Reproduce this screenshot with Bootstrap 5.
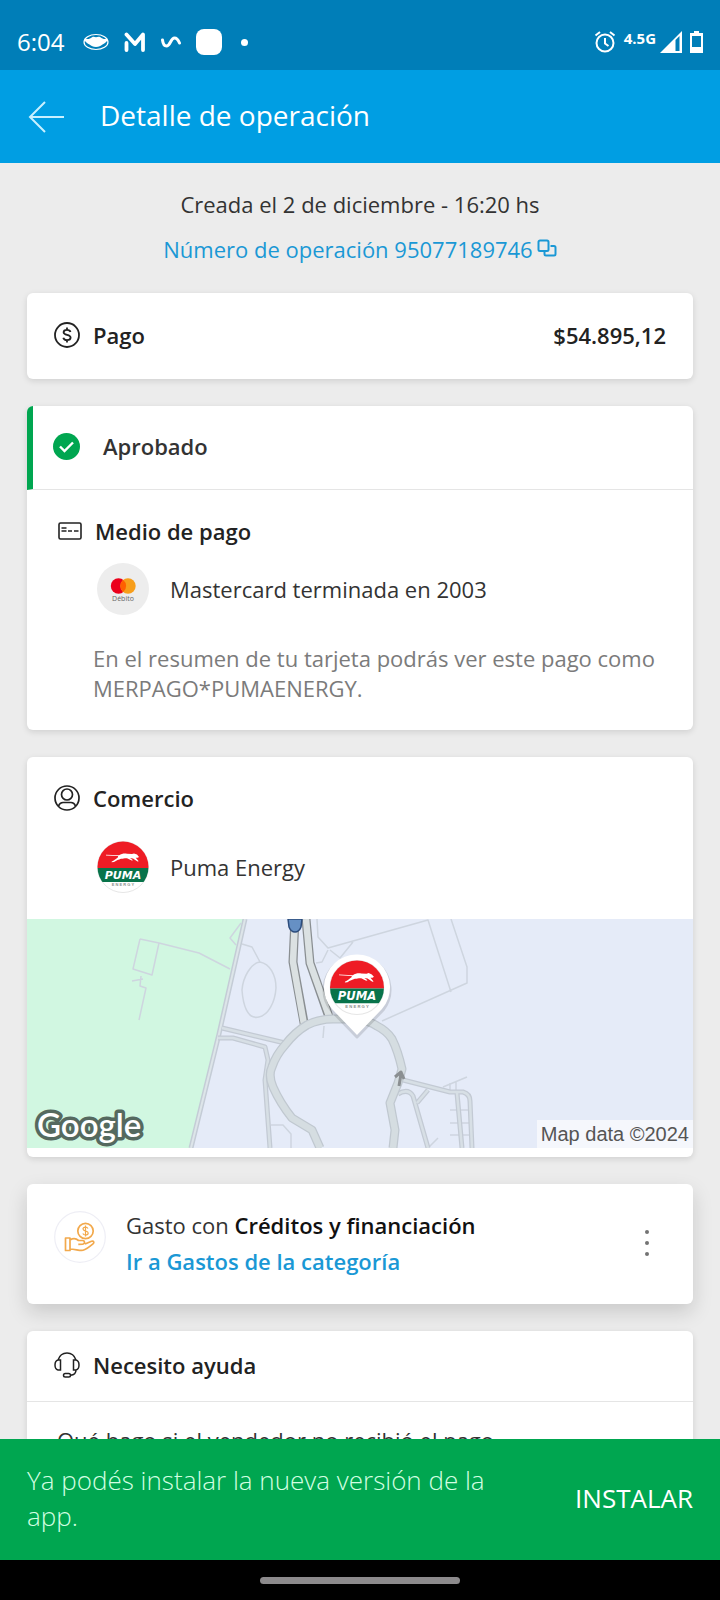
<!DOCTYPE html>
<html lang="es">
<head>
<meta charset="utf-8">
<meta name="viewport" content="width=device-width, initial-scale=1">
<title>Detalle de operación</title>
<link href="https://cdn.jsdelivr.net/npm/bootstrap@5.3.0/dist/css/bootstrap.min.css" rel="stylesheet">
<style>
  body { background: #ececec; color: #333; font-family: "Open Sans", sans-serif; font-size: 22px; line-height: 32px; }
  svg { display: block; flex: none; }
  .status-bar { background: #007eb8; height: 70px; padding: 14px 17px 0; }
  .clock { font-size: 24px; }
  .notices { gap: 15px; }
  .network { font-size: 15px; line-height: 20px; }
  .app-bar { background: #009ee3; height: 93px; padding: 0 28px; gap: 35px; }
  .app-bar h1 { font-size: 28px; line-height: 36px; }
  .intro { padding: 25px 27px 28px; gap: 13px; }
  .sheet { padding: 0 27px; gap: 27px; }
  .panel { border: 0; border-radius: 6px; box-shadow: 0 2px 6px rgba(0,0,0,.12); color: #333; }
  .panel-raised { box-shadow: 0 8px 20px rgba(0,0,0,.15); }
  .brand-link { color: #1a98d5; text-decoration: none; }
  .title { font-size: 22px; line-height: 32px; font-weight: 600; margin: 0; color: #222; }
  .head { gap: 13px; }
  .pay { padding: 26px 27px 28px; }
  .pad { padding: 25px 27px 27px; }
  .shop { padding: 25px 27px 26px; }
  .approved { border-left: 6px solid #00a650; border-bottom: 1px solid #e5e5e5; border-top-left-radius: 6px; padding: 24px 20px 27px; gap: 23px; }
  .approved .title { color: #333; }
  .detail { padding-left: 43px; gap: 21px; margin-top: 16px; }
  .shop .detail { margin-top: 27px; }
  .note { color: #7b7b7b; line-height: 30px; padding-left: 39px; margin: 28px 0 0; }
  .avatar { width: 52px; height: 52px; }
  .map { height: 229px; margin-bottom: 9px; }
  .credit { background: rgba(255,255,255,.6); color: #555; font-family: "Liberation Sans", sans-serif; font-size: 20px; line-height: 28px; padding: 0 4px; }
  .spend { padding: 23px 27px 25px; gap: 20px; }
  .spend-lines { line-height: 36px; }
  .spend-lines b { font-weight: 600; color: #111; }
  .help { padding: 18px 27px 20px; }
  .question { border-top: 1px solid #e5e5e5; padding: 22px 30px 8px; color: #333; }
  .snack { background: #00a650; color: #d3ffe2; font-size: 26px; font-weight: 300; line-height: 36px; padding: 23px 27px 26px; gap: 64px; }
  .snack .btn { color: #fff; font-size: 26px; line-height: 36px; }
  .nav-zone { background: #000; height: 40px; }
  .nav-handle { background: #8c8a8c; width: 200px; height: 7px; }
</style>
</head>
<body>

<svg width="0" height="0" class="position-absolute" aria-hidden="true">
  <defs>
    <clipPath id="disc"><circle cx="26" cy="26" r="25.5"/></clipPath>
    <symbol id="puma" viewBox="0 0 52 52">
      <circle cx="26" cy="26" r="25.5" fill="#fff" stroke="#e6e6e6"/>
      <g clip-path="url(#disc)">
        <path d="M0 0h52v27H0z" fill="#ee1c25"/>
        <path d="M0 27h52v14H0z" fill="#08734a"/>
      </g>
      <path d="M9 13.7l13 .6c2.600-1.600 5-2 8-1.600l5 .3 2-.6 3 1.200 2 2.300-1.300.9-2-.1 3 3.600-1.200.3-4.500-3.200-3-.3 3 2.100-1.300.3-4.700-2.300c-3-.1-4 .7-6 .6-2.500.8-4.500 1.700-7 3.200l-2.500.3.3-.9c2.200-.9 3.700-2.200 6-4l.3-1.300L9 14.500z" fill="#fff"/>
      <text x="26" y="37.500" text-anchor="middle" font-family="DejaVu Sans, sans-serif" font-size="11" font-weight="700" font-style="italic" fill="#fff">PUMA</text>
      <text x="26" y="45" text-anchor="middle" font-family="Liberation Sans, sans-serif" font-size="4" font-weight="700" fill="#8a8f8c">E N E R G Y</text>
    </symbol>
  </defs>
</svg>

<header>
  <div class="status-bar d-flex align-items-center justify-content-between text-white">
    <div class="notices d-flex align-items-center">
      <span class="clock me-1">6:04</span>
      <svg width="26" height="20" viewBox="0 0 26 20"><ellipse cx="13" cy="10" rx="12" ry="7.500" fill="none" stroke="#fff" stroke-width="1.200"/><path d="M1.500 6.500c3 1 5.500.5 7.500-1.300 1.500-.8 2.500-.3 4 0 1.500-.5 3-.8 4.500 0 2 1.800 4.500 2.300 7 1.300 0 3.500-2.500 4.500-5 6-2 1.500-3.500 2.500-6.500 2.500s-4.500-1-6.500-2.500c-2.500-1.500-5-2.500-5-6z" fill="#fff"/></svg>
      <svg width="22" height="20" viewBox="0 0 22 20"><path d="M2.500 2.500L11 12l8-9.500V18M2.500 11v7" fill="none" stroke="#fff" stroke-width="3.800" stroke-linecap="round" stroke-linejoin="round"/></svg>
      <svg width="20" height="12" viewBox="0 0 20 12"><path d="M1.500 4c.5 4 2 6 4 6 4 0 4-8 8-8 2.500 0 3.500 1.500 5 5" fill="none" stroke="#fff" stroke-width="3" stroke-linecap="round"/></svg>
      <svg width="26" height="26" viewBox="0 0 26 26"><rect width="26" height="26" rx="8" fill="#fff"/></svg>
      <svg class="ms-1" width="7" height="7" viewBox="0 0 7 7"><circle cx="3.500" cy="3.500" r="3.500" fill="#fff"/></svg>
    </div>
    <div class="d-flex align-items-center">
      <svg width="22" height="22" viewBox="0 0 22 22" fill="none" stroke="#fff"><circle cx="11" cy="12" r="8.500" stroke-width="2"/><path d="M11 7v5.500l3.500 2.500M1.500 4.500L6 1M20.500 4.500L16 1" stroke-width="2"/></svg>
      <span class="network fw-bold ms-2 mb-2">4.5G</span>
      <svg class="ms-1" width="22" height="22" viewBox="0 0 22 22"><path d="M0 22L22 0v22z" fill="#fff"/><path d="M15.500 9l4-4v15h-4z" fill="#007eb8"/></svg>
      <svg class="ms-2" width="13" height="22" viewBox="0 0 13 22"><path d="M4 0h5v2h4v20H0V2h4z" fill="#fff"/><path d="M2 5h9v11H2z" fill="#007eb8"/></svg>
    </div>
  </div>
  <nav class="app-bar d-flex align-items-center text-white">
    <button type="button" class="btn p-0 border-0" aria-label="Volver">
      <svg width="37" height="32" viewBox="0 0 37 32" fill="none" stroke="#c8f0ff" stroke-width="2"><path d="M36 16H2M17 1L2 16l15 15"/></svg>
    </button>
    <h1 class="mb-1 fw-normal">Detalle de operación</h1>
  </nav>
</header>

<main>
  <section class="intro d-flex flex-column align-items-center text-center">
    <div>Creada el 2 de diciembre - 16:20 hs</div>
    <a href="#copiar" class="brand-link d-flex align-items-center gap-1">Número de operación 95077189746
      <svg width="20" height="20" viewBox="0 0 20 20" fill="none" stroke="currentColor" stroke-width="2"><path d="M7 12H3a1.500 1.500 0 0 1-1.500-1.500V3A1.500 1.500 0 0 1 3 1.500h7A1.500 1.500 0 0 1 11.500 3v7.500A1.500 1.500 0 0 1 10 12zM13.500 7H17a1.500 1.500 0 0 1 1.500 1.500V15a1.500 1.500 0 0 1-1.500 1.500H9A1.500 1.500 0 0 1 7.500 15v-4"/></svg>
    </a>
  </section>

  <div class="sheet d-flex flex-column">
    <section class="card panel">
      <div class="pay d-flex align-items-center justify-content-between">
        <div class="head d-flex align-items-center">
          <svg width="26" height="26" viewBox="0 0 26 26" fill="none" stroke="#222" stroke-width="1.800"><circle cx="13" cy="13" r="12"/><path d="M16.500 10c-.4-1.500-1.600-2.200-3.500-2.200s-3.400.9-3.400 2.500c0 3.600 7 1.600 7 5.300 0 1.600-1.400 2.600-3.600 2.600-2 0-3.300-.8-3.700-2.400M13 5.500V8M13 18v2.500"/></svg>
          <h2 class="title">Pago</h2>
        </div>
        <strong class="title">$54.895,12</strong>
      </div>
    </section>

    <section class="card panel">
      <div class="approved d-flex align-items-center">
        <svg width="27" height="27" viewBox="0 0 27 27"><circle cx="13.500" cy="13.500" r="13.500" fill="#00a650"/><path d="M7 13.500l4.500 4.500 8.500-8.500" fill="none" stroke="#fff" stroke-width="2.400"/></svg>
        <h2 class="title">Aprobado</h2>
      </div>
      <div class="pad">
        <div class="head d-flex align-items-center ps-1">
          <svg width="24" height="18" viewBox="0 0 24 18" fill="none" stroke="#222" stroke-width="1.600"><rect x="1" y="1" width="22" height="16" rx="1.500"/><path d="M3.500 6h5M3.500 9h5M10 9h4M16 9h4.500"/></svg>
          <h2 class="title">Medio de pago</h2>
        </div>
        <div class="detail d-flex align-items-center">
          <svg class="avatar" viewBox="0 0 52 52"><circle cx="26" cy="26" r="26" fill="#ededed"/><circle cx="21.500" cy="23" r="7.700" fill="#eb001b"/><circle cx="31" cy="23" r="7.700" fill="#f79e1b"/><path d="M26.250 17a7.700 7.700 0 0 1 0 12 7.700 7.700 0 0 1 0-12z" fill="#ff5f00"/><text x="26" y="38" text-anchor="middle" font-family="Open Sans, sans-serif" font-size="7" fill="#666">Débito</text></svg>
          <span>Mastercard terminada en 2003</span>
        </div>
        <p class="note">En el resumen de tu tarjeta podrás ver este pago como MERPAGO*PUMAENERGY.</p>
      </div>
    </section>

    <section class="card panel">
      <div class="shop">
        <div class="head d-flex align-items-center">
          <svg width="26" height="26" viewBox="0 0 26 26" fill="none" stroke="#222" stroke-width="1.700"><circle cx="13" cy="13" r="12"/><circle cx="13" cy="9.500" r="5.500"/><path d="M4.500 21c.8-2.200 2.500-3.500 4.500-3.500h8c2 0 3.700 1.300 4.500 3.500"/></svg>
          <h2 class="title">Comercio</h2>
        </div>
        <div class="detail d-flex align-items-center">
          <svg class="avatar"><use href="#puma"/></svg>
          <span>Puma Energy</span>
        </div>
      </div>
      <div class="map position-relative">
        <svg width="100%" height="100%" viewBox="0 0 666 229" preserveAspectRatio="xMidYMid slice" fill="none" stroke-linejoin="round">
          <path d="M0 0h666v229H0z" fill="#e5ebf8"/>
          <path d="M0 0h217l-26 115-28 114H0z" fill="#d1f7e1"/>
          <g stroke="#ced5df" stroke-width="1.500">
            <path d="M113 20l19 4 40 10 31 16M113 20l-7 30 19 6 7-32M105 62l11-2M114 57l-1 10 6 2-7 32M214 4l-11 15 6 7M215 25l10 3 8 15M233 43c10 2 16 13 16 26-1 15-8 27-17 29-12 3-16-13-17-27 1-13 9-27 18-28zM290 0l1 18 10 11 100-28 23 72M424 0l16 48v16l-85 38M301 31l-6 12-6 1M303 31l10 8 13-16M297 107l-1 12M244 206l12 0 8 9v14M416 168l24-10M423 173v-9M429 173v-11M423 191h20M423 204h20M423 216h20M401 229l10-10"/>
          </g>
          <path d="M218 0l-26 115-28 114" stroke="#c4ccd6" stroke-width="5"/>
          <path d="M218 0l-26 115-28 114" stroke="#dde5e9" stroke-width="2"/>
          <g stroke="#c3cad4" stroke-width="5">
            <path d="M195 109l63 15M191 119l15 0 32 9 3 13-3 20 5 68M376 161l47 12h13q7 2 7 9l2 47M430 174l5 55M371 175q10-6 15 2l15 52M390 184l11-13"/>
          </g>
          <g stroke="#d7dfe5" stroke-width="2.500">
            <path d="M195 109l63 15M191 119l15 0 32 9 3 13-3 20 5 68M376 161l47 12h13q7 2 7 9l2 47M430 174l5 55M371 175q10-6 15 2l15 52M390 184l11-13"/>
          </g>
          <g stroke="#8a8f92" stroke-width="9"><path d="M268 0l-2 43 12 66M279 0l4 44 19 54"/></g>
          <g stroke="#dbe1e2" stroke-width="6.500"><path d="M268 0l-2 43 12 68M279 0l4 44 20 56"/></g>
          <path d="M293 229l-8-18-20-12q-12-15-19-31-5-12-1-20 4-12 13-22 10-13 22-20 12-6 26-6h24q13 2 20 7 10 5 15 13 6 12 10 30l-4 14-8 20 5 27-2 18" stroke="#c0c8d0" stroke-width="9"/>
          <path d="M293 229l-8-18-20-12q-12-15-19-31-5-12-1-20 4-12 13-22 10-13 22-20 12-6 26-6h24q13 2 20 7 10 5 15 13 6 12 10 30l-4 14-8 20 5 27-2 18" stroke="#d5dde1" stroke-width="6.500"/>
          <path d="M261 0h14l-1 8q-2 5-6 5t-6-5z" fill="#6690c4" stroke="#2c4c7c" stroke-width="1.500"/>
          <path d="M372 167l2-12M368 158l6-5 3 7" stroke="#8b8f92" stroke-width="3"/>
          <path d="M330 118L304 91a33 33 0 1 1 52 0z" fill="#000" opacity=".12" stroke="#000" stroke-width="3"/>
          <path d="M330 116L305 90a33 33 0 1 1 50 0z" fill="#fff"/>
          <use href="#puma" x="302.500" y="41" width="55" height="55"/>
          <text x="10" y="218" font-family="Lato, sans-serif" font-weight="600" font-size="33" fill="#fff" stroke="#55695f" stroke-width="7" paint-order="stroke">Google</text>
        </svg>
        <div class="credit position-absolute bottom-0 end-0">Map data ©2024</div>
      </div>
    </section>

    <section class="card panel panel-raised">
      <div class="spend d-flex align-items-start">
        <svg class="avatar mt-1" viewBox="0 0 52 52" fill="none" stroke="#f2a94c" stroke-width="1.700" stroke-linejoin="round"><circle cx="26" cy="26" r="25.300" stroke="#eeeef5" stroke-width="1.200"/><circle cx="31.500" cy="20" r="7.700"/><path d="M34 17.500c-.6-1-1.400-1.400-2.500-1.400-1.500 0-2.500.7-2.500 1.900 0 2.700 5.200 1.400 5.200 4 0 1.200-1 2-2.700 2-1.300 0-2.200-.5-2.700-1.500M31.500 14.500v11" stroke-width="1.200"/><path d="M11.500 27h4.500v12.500h-4.500zM16 29c3-1.800 6-1.700 8.500.5h4c2.500 0 2.800 3.300.3 3.600l-4.500.3M31 33l6.500-2.700c2.200-.7 3.200 1.200 1.500 2.600-3.500 2.900-7 5.600-10 6.400-3 .8-8-1.300-13-1.300"/></svg>
        <div class="spend-lines flex-grow-1">
          <div>Gasto con <b>Créditos y financiación</b></div>
          <a href="#gastos" class="brand-link fw-semibold">Ir a Gastos de la categoría</a>
        </div>
        <button type="button" class="btn border-0 align-self-center px-3 py-0" aria-label="Más opciones">
          <svg width="6" height="28" viewBox="0 0 6 28" fill="#737373"><circle cx="3" cy="3" r="2"/><circle cx="3" cy="14" r="2"/><circle cx="3" cy="25" r="2"/></svg>
        </button>
      </div>
    </section>

    <section class="card panel">
      <div class="help head d-flex align-items-center">
        <svg width="26" height="26" viewBox="0 0 26 26" fill="none" stroke="#222" stroke-width="1.500"><path d="M4 8c1.500-4.500 5-7 9-7s7.500 2.500 9 7M6.500 8H4C2 8.500 1 10.500 1 13s1 4.500 3 5h2.500zM19.500 8H22c2 .5 3 2.500 3 5s-1 4.500-3 5h-2.500zM22 18c0 3.500-2 5-5.500 5.200"/><rect x="9.500" y="21.500" width="7" height="3.500" rx="1.750"/></svg>
        <h2 class="title">Necesito ayuda</h2>
      </div>
      <div class="question">Qué hago si el vendedor no recibió el pago</div>
    </section>
  </div>
</main>

<footer class="fixed-bottom">
  <div class="snack d-flex align-items-center justify-content-between">
    <div>Ya podés instalar la nueva versión de la app.</div>
    <button type="button" class="btn border-0 p-0 fw-normal">INSTALAR</button>
  </div>
  <div class="nav-zone d-flex align-items-center justify-content-center">
    <div class="nav-handle rounded-pill"></div>
  </div>
</footer>

<script src="https://cdn.jsdelivr.net/npm/bootstrap@5.3.0/dist/js/bootstrap.bundle.min.js"></script>
</body>
</html>
